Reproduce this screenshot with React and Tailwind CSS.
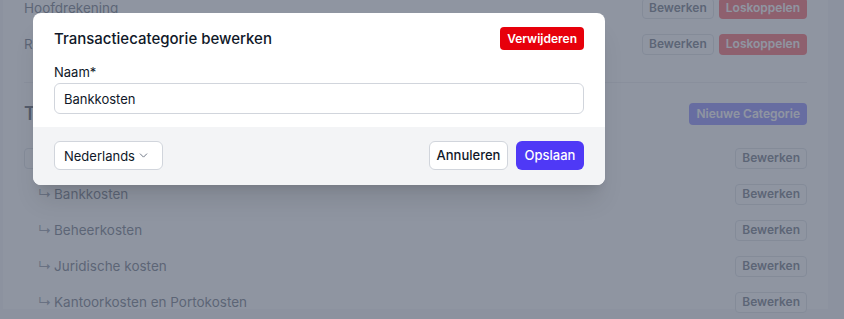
import React from "react";
import { ChevronDown } from "lucide-react";

function Btn({ children }) {
  return (
    <span className="inline-flex h-[21px] items-center rounded border border-gray-300 bg-white px-[6px] text-xs font-semibold text-gray-700">
      {children}
    </span>
  );
}

function Unlink() {
  return (
    <span className="inline-flex h-[21px] items-center rounded bg-red-500 px-[7px] text-xs font-semibold text-white">
      Loskoppelen
    </span>
  );
}

function SubRow({ name }) {
  return (
    <div className="flex h-[36px] items-center justify-between">
      <span className="flex items-center pl-[14px] text-[13.5px] text-gray-700">
        <span className="mr-[2px] w-[14px] text-gray-500">↳</span>
        {name}
      </span>
      <Btn>Bewerken</Btn>
    </div>
  );
}

export default function App() {
  return (
    <div className="relative h-[319px] w-full overflow-hidden bg-gray-100 font-['Inter',sans-serif]">
      <div className="ml-[3px] mr-[16px] h-full bg-white px-[21px]">
        <div className="-mt-[10px]">
          <div className="flex h-[36px] items-center justify-between">
            <span className="text-[13.5px] text-gray-700">Hoofdrekening</span>
            <div className="flex gap-[5px]">
              <Btn>Bewerken</Btn>
              <Unlink />
            </div>
          </div>
          <div className="flex h-[36px] items-center justify-between">
            <span className="w-[9px] overflow-hidden whitespace-nowrap text-[13.5px] text-gray-700">Rekening courant</span>
            <div className="flex gap-[5px]">
              <Btn>Bewerken</Btn>
              <Unlink />
            </div>
          </div>
          <div className="mt-[20px] border-t border-gray-200" />
          <div className="mt-[19px] flex h-[24px] items-center justify-between">
            <span className="w-[9px] overflow-hidden whitespace-nowrap text-lg font-semibold text-gray-900">Transactiecategorieën</span>
            <span className="inline-flex h-[22px] items-center rounded bg-indigo-500 px-[7px] text-xs font-semibold text-white">
              Nieuwe Categorie
            </span>
          </div>
          <div className="mt-[14px] flex h-[36px] items-center justify-between">
            <span className="flex items-center gap-2">
              <span className="h-[21px] w-[120px] rounded border border-gray-300" />
            </span>
            <Btn>Bewerken</Btn>
          </div>
          <SubRow name="Bankkosten" />
          <SubRow name="Beheerkosten" />
          <SubRow name="Juridische kosten" />
          <SubRow name="Kantoorkosten en Portokosten" />
        </div>
      </div>

      <div className="absolute inset-0 bg-gray-500/75" />

      <div className="absolute left-[33px] top-[13px] w-[572px] overflow-hidden rounded-lg bg-white shadow-xl">
        <div className="px-[21px] pb-[13px] pt-[14px]">
          <div className="flex h-[23px] items-center justify-between">
            <h2 className="text-[15px] font-medium leading-[20px] text-gray-900">Transactiecategorie bewerken</h2>
            <span className="inline-flex h-[23px] items-center rounded bg-red-600 px-[7px] text-xs font-semibold text-white">
              Verwijderen
            </span>
          </div>
          <label className="mt-[12px] block text-[13px] leading-[20px] text-gray-900">Naam*</label>
          <div className="mt-[1px] flex h-[31px] items-center rounded-md border border-gray-300 bg-white px-[9px] text-[13px] leading-[18px] text-gray-900">
            Bankkosten
          </div>
        </div>
        <div className="flex items-center justify-between bg-gray-100 px-[21px] pb-[15px] pt-[14px]">
          <div className="flex h-[29px] w-[109px] items-center justify-between rounded-md border border-gray-300 bg-white pl-[9px] pr-[12px] text-[13px] leading-[18px] text-gray-900">
            Nederlands
            <ChevronDown size={13} className="text-gray-500" strokeWidth={1.75} />
          </div>
          <div className="flex gap-[8px]">
            <span className="inline-flex h-[29px] w-[79px] items-center justify-center rounded-md border border-gray-300 bg-white text-[13px] font-medium text-gray-900">
              Annuleren
            </span>
            <span className="inline-flex h-[29px] w-[68px] items-center justify-center rounded-md bg-indigo-600 text-[13px] font-medium text-white">
              Opslaan
            </span>
          </div>
        </div>
      </div>
    </div>
  );
}
